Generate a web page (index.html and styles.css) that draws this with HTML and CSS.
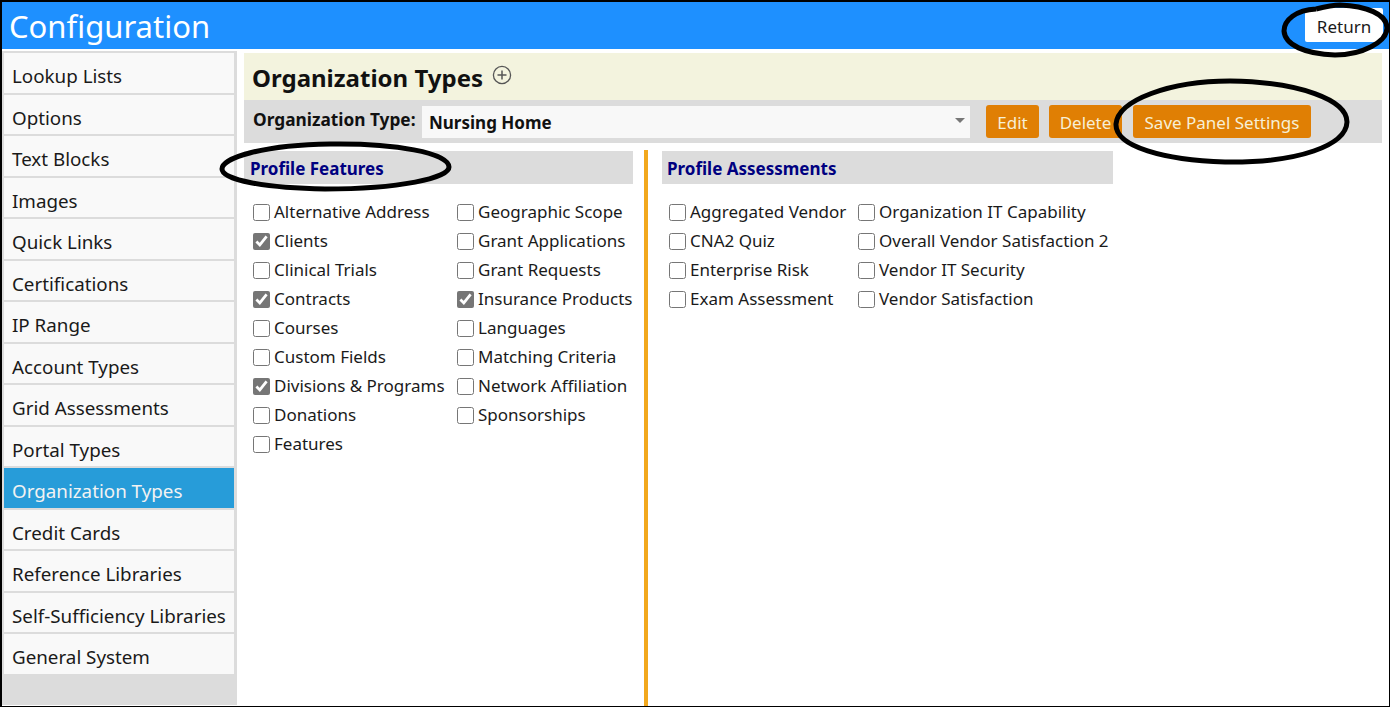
FILE: index.html
```html
<!DOCTYPE html>
<html>
<head>
    <link rel="stylesheet" href="styles.css">
</head>
<body>
    <div class="page">
        <div class="header">
            <h1>Configuration</h1>
            <a class="return-btn">Return</a>
        </div>
        <div class="content">
            <div class="sidebar">
                <a class="nav-item">Lookup Lists</a>
                <a class="nav-item">Options</a>
                <a class="nav-item">Text Blocks</a>
                <a class="nav-item">Images</a>
                <a class="nav-item">Quick Links</a>
                <a class="nav-item">Certifications</a>
                <a class="nav-item">IP Range</a>
                <a class="nav-item">Account Types</a>
                <a class="nav-item">Grid Assessments</a>
                <a class="nav-item">Portal Types</a>
                <a class="nav-item active">Organization Types</a>
                <a class="nav-item">Credit Cards</a>
                <a class="nav-item">Reference Libraries</a>
                <a class="nav-item">Self-Sufficiency Libraries</a>
                <a class="nav-item">General System</a>
            </div>
            <div class="main">
                <div class="title-bar">
                    <h2>Organization Types</h2>
                    <svg class="add-icon" width="20" height="20" viewBox="0 0 20 20">
                        <circle cx="10" cy="10" r="8.6" fill="none" stroke="#555" stroke-width="1.3"/>
                        <path d="M10 5.5v9M5.5 10h9" fill="none" stroke="#555" stroke-width="1.5"/>
                    </svg>
                </div>
                <div class="toolbar">
                    <label class="type-label">Organization Type:</label>
                    <div class="type-select">Nursing Home<span class="caret"></span></div>
                    <button class="btn btn-edit">Edit</button>
                    <button class="btn btn-delete">Delete</button>
                    <button class="btn btn-save">Save Panel Settings</button>
                </div>
                <div class="panels">
                    <div class="panel panel-features">
                        <div class="panel-head">Profile Features</div>
                        <div class="check-cols">
                            <div class="check-col col-a">
                                <label class="check"><input type="checkbox">Alternative Address</label>
                                <label class="check"><input type="checkbox" checked>Clients</label>
                                <label class="check"><input type="checkbox">Clinical Trials</label>
                                <label class="check"><input type="checkbox" checked>Contracts</label>
                                <label class="check"><input type="checkbox">Courses</label>
                                <label class="check"><input type="checkbox">Custom Fields</label>
                                <label class="check"><input type="checkbox" checked>Divisions &amp; Programs</label>
                                <label class="check"><input type="checkbox">Donations</label>
                                <label class="check"><input type="checkbox">Features</label>
                            </div>
                            <div class="check-col">
                                <label class="check"><input type="checkbox">Geographic Scope</label>
                                <label class="check"><input type="checkbox">Grant Applications</label>
                                <label class="check"><input type="checkbox">Grant Requests</label>
                                <label class="check"><input type="checkbox" checked>Insurance Products</label>
                                <label class="check"><input type="checkbox">Languages</label>
                                <label class="check"><input type="checkbox">Matching Criteria</label>
                                <label class="check"><input type="checkbox">Network Affiliation</label>
                                <label class="check"><input type="checkbox">Sponsorships</label>
                            </div>
                        </div>
                    </div>
                    <div class="panel panel-assess">
                        <div class="panel-head">Profile Assessments</div>
                        <div class="check-cols">
                            <div class="check-col col-c">
                                <label class="check"><input type="checkbox">Aggregated Vendor</label>
                                <label class="check"><input type="checkbox">CNA2 Quiz</label>
                                <label class="check"><input type="checkbox">Enterprise Risk</label>
                                <label class="check"><input type="checkbox">Exam Assessment</label>
                            </div>
                            <div class="check-col">
                                <label class="check"><input type="checkbox">Organization IT Capability</label>
                                <label class="check"><input type="checkbox">Overall Vendor Satisfaction 2</label>
                                <label class="check"><input type="checkbox">Vendor IT Security</label>
                                <label class="check"><input type="checkbox">Vendor Satisfaction</label>
                            </div>
                        </div>
                    </div>
                </div>
            </div>
        </div>
        <!-- hand drawn annotation circles on top of the screenshot -->
        <svg class="marks" width="1390" height="707" viewBox="0 0 1390 707">
            <g fill="none" stroke="#000" stroke-width="5">
                <path d="M1316 9C1296 10 1284 20 1284 31C1285 45 1305 54 1335 55C1362 55 1387 42 1387 28C1387 14 1366 6 1340 5C1332 5 1324 7 1316 9"/>
                <path d="M222 169C222 158 262 145 330 144C395 143 449 153 449 167C449 178 400 189 325 189C265 188 222 180 222 169Z"/>
                <path d="M1116 124C1118 100 1170 81 1230 81C1300 82 1347 100 1347 122C1346 145 1300 163 1225 162C1165 160 1115 147 1116 124Z"/>
            </g>
        </svg>
    </div>
</body>
</html>
```

FILE: styles.css
```css
* {
    box-sizing: border-box;
}
body {
    margin: 0;
    font-family: "Noto Sans", Arial, sans-serif;
    color: #1a1a1a;
    background-color: #fff;
}
.page {
    position: relative;
    width: 1390px;
    height: 707px;
    overflow: hidden;
    border: solid #000;
    border-width: 2px 1px 1px 2px;
}
.header {
    display: flex;
    justify-content: space-between;
    height: 47px;
    background-color: #1e90ff;
}
.header h1 {
    margin: 0;
    padding: 3px 0 0 7px;
    font-size: 31px;
    line-height: 42px;
    font-weight: 400;
    color: #fff;
}
.return-btn {
    width: 78px;
    height: 34px;
    margin: 6px 6px 0 0;
    background-color: #fff;
    border-radius: 2px;
    font-size: 17px;
    line-height: 38px;
    text-align: center;
}
.content {
    display: flex;
    height: 656px;
}
.sidebar {
    width: 235px;
    margin-top: 2px;
    padding: 2px 3px 0 2px;
    background-color: #dcdcdc;
}
.nav-item {
    display: block;
    height: 39.5px;
    margin-bottom: 2px;
    padding: 2px 0 0 8px;
    background-color: #f9f9f9;
    font-size: 18.8px;
    line-height: 43px;
    white-space: nowrap;
}
.nav-item.active {
    background-color: #279cd9;
    color: #f2f2f2;
}
.main {
    width: 1138px;
    margin: 4px 0 0 7px;
}
.title-bar {
    display: flex;
    align-items: center;
    height: 47px;
    padding: 2px 0 0 8px;
    background-color: #f3f3de;
}
.title-bar h2 {
    margin: 0;
    font-size: 24px;
    font-weight: 700;
    color: #111;
}
.add-icon {
    margin: -5px 0 0 9px;
}
.toolbar {
    display: flex;
    align-items: flex-start;
    height: 43px;
    padding: 5px 0 0 9px;
    background-color: #dcdcdc;
}
.type-label {
    width: 169px;
    padding-top: 3px;
    font-size: 17.3px;
    font-weight: 700;
    color: #111;
    white-space: nowrap;
}
.type-select {
    position: relative;
    width: 548px;
    height: 32px;
    margin-top: 1px;
    padding-left: 7px;
    background-color: #f8f8f8;
    font-size: 17px;
    line-height: 34px;
    font-weight: 700;
    color: #111;
}
.caret {
    position: absolute;
    right: 5px;
    top: 12px;
    border: 5px solid transparent;
    border-top: 5px solid #777;
}
.btn {
    height: 33px;
    padding: 2px 0 0;
    border: 0;
    border-radius: 3px;
    background-color: #e07f04;
    font-family: inherit;
    font-size: 17px;
    color: #f7efd6;
    white-space: nowrap;
}
.btn-edit {
    width: 53px;
    margin-left: 16px;
}
.btn-delete {
    width: 73px;
    margin-left: 10px;
}
.btn-save {
    width: 178px;
    margin-left: 11px;
}
.panels {
    display: flex;
    height: 564px;
}
.panel-features {
    width: 400px;
    margin-top: 8px;
    padding-right: 11px;
}
.panel-assess {
    width: 469px;
    margin-top: 7px;
    padding-left: 14px;
    border-left: 4px solid #f2a81d;
}
.panel-head {
    height: 33px;
    margin-top: 0;
    padding-left: 6px;
    background-color: #dcdcdc;
    font-size: 17px;
    line-height: 36px;
    font-weight: 700;
    color: #000080;
    white-space: nowrap;
}
.panel-assess .panel-head {
    margin-top: 1px;
    padding-left: 5px;
}
.check-cols {
    display: flex;
    padding: 14px 0 0 9px;
}
.panel-assess .check-cols {
    padding-left: 7px;
}
.col-a {
    width: 204px;
}
.col-c {
    width: 189px;
}
.check {
    display: flex;
    align-items: center;
    height: 29px;
    padding-bottom: 2px;
    font-size: 17px;
    white-space: nowrap;
}
.check input {
    width: 17px;
    height: 17px;
    margin: 2px 4px 0 0;
    accent-color: #767676;
}
.marks {
    position: absolute;
    left: -2px;
    top: -2px;
    pointer-events: none;
}
```
